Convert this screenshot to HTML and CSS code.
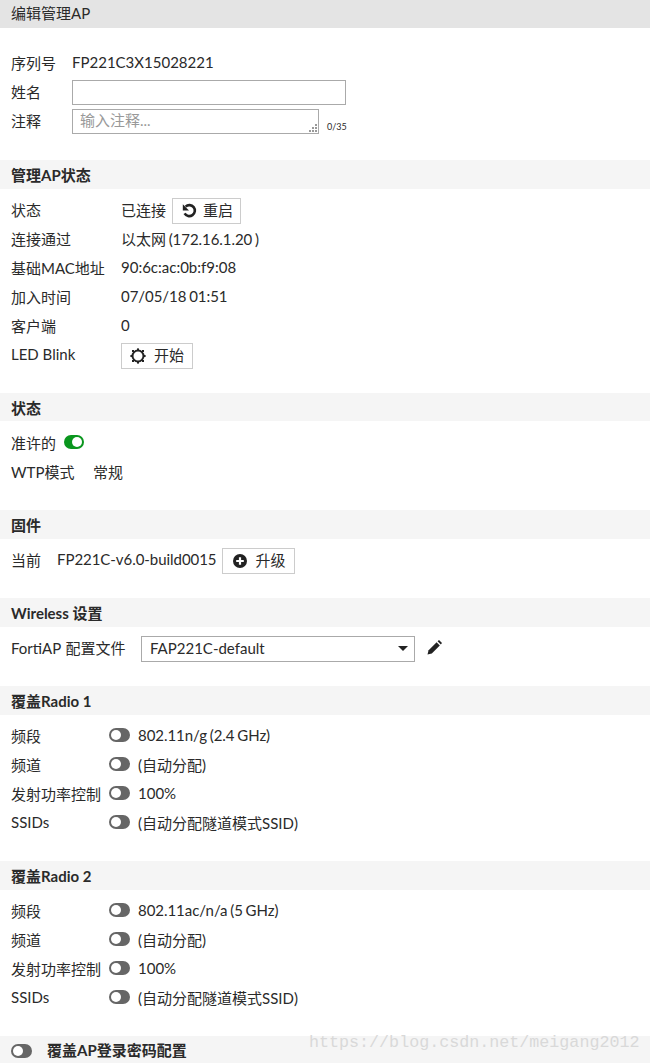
FILE: index.html
```html
<!DOCTYPE html>
<html lang="zh">
<head>
<meta charset="utf-8">
<title>编辑管理AP</title>
<link rel="stylesheet" href="styles.css">
</head>
<body>
<div class="page">
  <h1 class="title">编辑管理AP</h1>
  <div class="form">
    <div class="row"><span class="label l-form">序列号</span><span>FP221C3X15028221</span></div>
    <div class="row"><span class="label l-form">姓名</span><input class="input" type="text"></div>
    <div class="row"><span class="label l-form">注释</span>
      <div class="comment"><span class="placeholder">输入注释...</span>
        <svg class="grip" width="9" height="9" viewBox="0 0 9 9"><g fill="#999"><rect x="7" y="1" width="2" height="2"/><rect x="4" y="4" width="2" height="2"/><rect x="7" y="4" width="2" height="2"/><rect x="1" y="7" width="2" height="2"/><rect x="4" y="7" width="2" height="2"/><rect x="7" y="7" width="2" height="2"/></g></svg>
      </div>
      <span class="count">0/35</span>
    </div>
  </div>

  <h2 class="head">管理AP状态</h2>
  <div class="section">
    <div class="row"><span class="label l-status">状态</span><span>已连接</span>
      <button class="btn b-restart"><svg width="15" height="15" viewBox="0 0 15 15"><path d="M3.6 3.6A5.5 5.5 0 1 1 2.6 10.4" fill="none" stroke="#222" stroke-width="2.6"/><path d="M0.8 1.2V7.4H7Z" fill="#222"/></svg><span>重启</span></button></div>
    <div class="row"><span class="label l-status">连接通过</span><span class="tight">以太网 (172.16.1.20 )</span></div>
    <div class="row"><span class="label l-status">基础MAC地址</span><span>90:6c:ac:0b:f9:08</span></div>
    <div class="row"><span class="label l-status">加入时间</span><span class="tight">07/05/18 01:51</span></div>
    <div class="row"><span class="label l-status">客户端</span><span>0</span></div>
    <div class="row"><span class="label l-status">LED Blink</span>
      <button class="btn b-start"><svg width="16" height="16" viewBox="0 0 16 16"><circle cx="8" cy="8" r="5.5" fill="none" stroke="#222" stroke-width="2"/><g fill="#222"><rect x="7" y="0.4" width="2" height="2.4"/><rect x="7" y="13.2" width="2" height="2.4"/><rect x="0.4" y="7" width="2.4" height="2"/><rect x="13.2" y="7" width="2.4" height="2"/><rect x="2" y="2" width="2" height="2"/><rect x="12" y="2" width="2" height="2"/><rect x="2" y="12" width="2" height="2"/><rect x="12" y="12" width="2" height="2"/></g></svg><span>开始</span></button></div>
  </div>

  <h2 class="head head-short">状态</h2>
  <div class="section">
    <div class="row"><span class="label l-auto">准许的</span><span class="toggle on"></span></div>
    <div class="row"><span class="label l-wtp">WTP模式</span><span>常规</span></div>
  </div>

  <h2 class="head">固件</h2>
  <div class="section">
    <div class="row"><span class="label l-current">当前</span><span class="firmware">FP221C-v6.0-build0015</span>
      <button class="btn b-upgrade"><svg width="14" height="14" viewBox="0 0 14 14"><circle cx="7" cy="7" r="7" fill="#222"/><path d="M3.2 7H10.8M7 3.2V10.8" stroke="#fff" stroke-width="2.2"/></svg><span>升级</span></button></div>
  </div>

  <h2 class="head">Wireless 设置</h2>
  <div class="section">
    <div class="row"><span class="label l-profile">FortiAP 配置文件</span>
      <div class="select"><span class="select-text">FAP221C-default</span><span class="arrow"></span></div>
      <svg class="pencil" width="15" height="15" viewBox="0 0 15 15"><path d="M0.5 14.5L1.6 10.2 9.6 2.2 12.8 5.4 4.8 13.4Z" fill="#222"/><path d="M10.6 1.2L12 0 15 3 13.8 4.4Z" fill="#222"/></svg></div>
  </div>

  <h2 class="head">覆盖Radio 1</h2>
  <div class="section">
    <div class="row"><span class="label l-radio">频段</span><span class="toggle"></span><span class="value tight">802.11n/g (2.4 GHz)</span></div>
    <div class="row"><span class="label l-radio">频道</span><span class="toggle"></span><span class="value">(自动分配)</span></div>
    <div class="row"><span class="label l-radio">发射功率控制</span><span class="toggle"></span><span class="value">100%</span></div>
    <div class="row"><span class="label l-radio">SSIDs</span><span class="toggle"></span><span class="value">(自动分配隧道模式SSID)</span></div>
  </div>

  <h2 class="head">覆盖Radio 2</h2>
  <div class="section">
    <div class="row"><span class="label l-radio">频段</span><span class="toggle"></span><span class="value tight">802.11ac/n/a (5 GHz)</span></div>
    <div class="row"><span class="label l-radio">频道</span><span class="toggle"></span><span class="value">(自动分配)</span></div>
    <div class="row"><span class="label l-radio">发射功率控制</span><span class="toggle"></span><span class="value">100%</span></div>
    <div class="row"><span class="label l-radio">SSIDs</span><span class="toggle"></span><span class="value">(自动分配隧道模式SSID)</span></div>
  </div>

  <h2 class="head head-toggle"><span class="toggle"></span><span class="head-text">覆盖AP登录密码配置</span></h2>
  <div class="watermark">https://blog.csdn.net/meigang2012</div>
</div>
</body>
</html>
```
FILE: styles.css
```css
* { box-sizing: border-box; }
html, body { margin: 0; padding: 0; background: #fff; }
body {
  height: 1063px;
  overflow: hidden;
  font-family: Lato, "Noto Sans CJK SC", sans-serif;
  font-size: 15px;
  color: #2a2a2a;
}
.page { position: relative; height: 1063px; overflow: hidden; }
.title {
  margin: 0;
  height: 28px;
  padding-left: 11px;
  background: #e4e4e4;
  font-size: 15px;
  font-weight: 400;
  line-height: 26px;
}
.form { padding: 21px 0 24px 11px; }
.section { padding: 7px 0 23px 11px; }
.row { display: flex; align-items: center; height: 29px; white-space: nowrap; }
.row > span { margin-bottom: 3px; }
.label { flex: none; }
.l-form { width: 61px; }
.l-status { width: 110px; }
.l-auto { width: 53px; }
.l-wtp { width: 82px; }
.l-current { width: 46px; }
.l-profile { width: 130px; word-spacing: 1px; }
.l-radio { width: 98px; }
.tight { word-spacing: -1px; letter-spacing: -0.05px; }
.firmware { letter-spacing: -0.05px; }
.head {
  margin: 0;
  height: 29px;
  padding-left: 11px;
  background: #f5f5f5;
  font-size: 15px;
  font-weight: 700;
  line-height: 31px;
}
.head-short { height: 28px; line-height: 30px; margin-bottom: 1px; }
.head-toggle { display: flex; align-items: center; height: 27px; padding-top: 2px; }
.head-text { margin-left: 15px; }
.input {
  width: 274px;
  height: 25px;
  border: 1px solid #aaa;
  background: #fff;
  padding: 0;
}
.comment {
  position: relative;
  width: 247px;
  height: 25px;
  border: 1px solid #aaa;
  padding-left: 7px;
  line-height: 21px;
  color: #999;
}
.grip { position: absolute; right: 1px; bottom: 1px; }
.row > .count { align-self: flex-end; margin: 0 0 2px 8px; font-size: 9px; line-height: 12px; padding-bottom: 1px; }
.btn {
  display: flex;
  align-items: center;
  height: 26px;
  padding: 0;
  border: 1px solid #ccc;
  background: #fff;
  font: inherit;
  color: inherit;
}
.btn > span { margin-bottom: 2px; }
.b-restart { width: 69px; margin-left: 6px; padding-left: 9px; gap: 6px; }
.b-start { width: 72px; padding-left: 8px; gap: 8px; }
.b-upgrade { width: 73px; margin-left: 5px; padding-left: 10px; gap: 9px; }
.select {
  display: flex;
  align-items: center;
  justify-content: space-between;
  width: 274px;
  height: 26px;
  padding: 0 6px 0 8px;
  border: 1px solid #aaa;
}
.select-text { margin-bottom: 2px; }
.arrow {
  width: 0;
  height: 0;
  border-left: 5px solid transparent;
  border-right: 5px solid transparent;
  border-top: 5px solid #222;
}
.pencil { margin-left: 12px; margin-bottom: 2px; }
.toggle {
  position: relative;
  flex: none;
  display: inline-block;
  width: 21px;
  height: 14px;
  border-radius: 7px;
  background: #666;
}
.toggle::after {
  content: "";
  position: absolute;
  left: 2px;
  top: 2px;
  width: 10px;
  height: 10px;
  border-radius: 50%;
  background: #fff;
}
.toggle.on { width: 20px; background: #0a961e; }
.toggle.on::after { left: 8px; }
.value { margin-left: 8px; }
.watermark {
  position: absolute;
  left: 309px;
  top: 1031px;
  font-family: "Liberation Mono", monospace;
  font-size: 16.7px;
  line-height: 24px;
  color: #d9d9d9;
}
```
